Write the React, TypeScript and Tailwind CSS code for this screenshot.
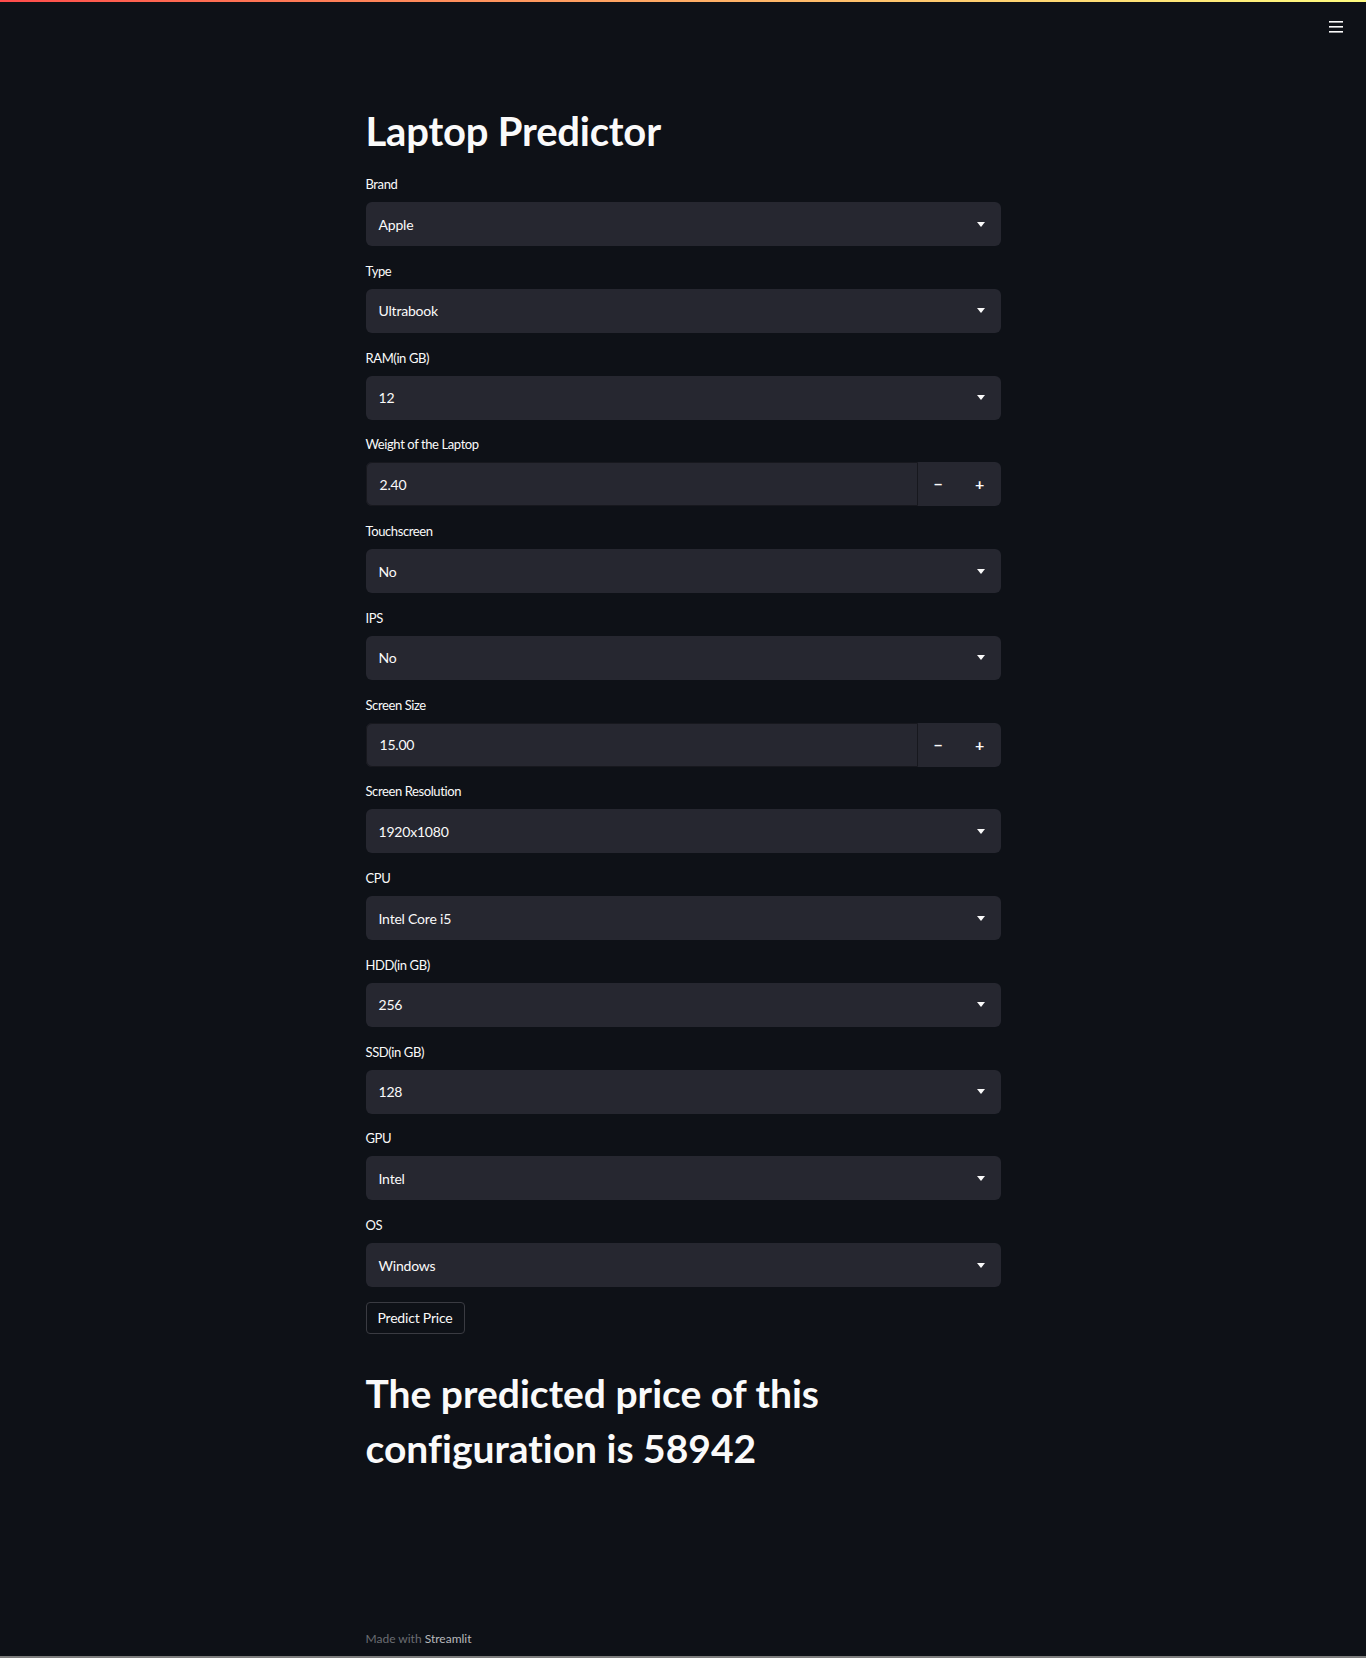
import React from "react";

type Field =
  | { kind: "select"; label: string; value: string }
  | { kind: "number"; label: string; value: string };

const fields: Field[] = [
  { kind: "select", label: "Brand", value: "Apple" },
  { kind: "select", label: "Type", value: "Ultrabook" },
  { kind: "select", label: "RAM(in GB)", value: "12" },
  { kind: "number", label: "Weight of the Laptop", value: "2.40" },
  { kind: "select", label: "Touchscreen", value: "No" },
  { kind: "select", label: "IPS", value: "No" },
  { kind: "number", label: "Screen Size", value: "15.00" },
  { kind: "select", label: "Screen Resolution", value: "1920x1080" },
  { kind: "select", label: "CPU", value: "Intel Core i5" },
  { kind: "select", label: "HDD(in GB)", value: "256" },
  { kind: "select", label: "SSD(in GB)", value: "128" },
  { kind: "select", label: "GPU", value: "Intel" },
  { kind: "select", label: "OS", value: "Windows" },
];

const Caret = () => (
  <svg width="8" height="5" viewBox="0 0 8 5" className="shrink-0">
    <path d="M0 0h8L4 5z" fill="#fafafa" />
  </svg>
);

const Menu = () => (
  <svg width="14" height="12" viewBox="0 0 14 12">
    <rect x="0" y="0" width="14" height="1.6" fill="#fafafa" />
    <rect x="0" y="5" width="14" height="1.6" fill="#fafafa" />
    <rect x="0" y="10" width="14" height="1.6" fill="#fafafa" />
  </svg>
);

const SelectBox = ({ value }: { value: string }) => (
  <div className="flex h-[44px] items-center justify-between rounded-[6px] bg-[#262730] pl-[13px] pr-[16px] text-[14px] tracking-[-0.2px] text-[#fafafa]">
    <span>{value}</span>
    <Caret />
  </div>
);

const NumberBox = ({ value }: { value: string }) => (
  <div className="flex h-[44px] rounded-[6px] bg-[#262730] text-[#fafafa]">
    <div className="flex flex-1 items-center rounded-l-[6px] border border-[#17181e] pl-[13px] text-[14px] tracking-[-0.2px]">
      {value}
    </div>
    <div className="flex w-[41.5px] items-center justify-center text-[16px] font-bold">−</div>
    <div className="flex w-[41.5px] items-center justify-center text-[16px] font-bold">+</div>
  </div>
);

export default function App() {
  return (
    <div
      className="flex h-[1658px] flex-col bg-[#0e1117] text-[#fafafa] [font-variant-ligatures:none]"
      style={{ fontFamily: "Lato, 'Open Sans', sans-serif" }}
    >
      <div className="h-[2px] bg-gradient-to-r from-[#ff4b4b] to-[#fffd80]" />
      <div className="flex justify-end pr-[23px] pt-[19px]">
        <Menu />
      </div>

      <main className="mx-auto mt-[72px] w-[635px]">
        <h1 className="text-[40px] font-bold leading-[52px] tracking-[-0.2px]">Laptop Predictor</h1>

        <div className="mt-[17px] flex flex-col gap-[14.75px]">
          {fields.map((f) => (
            <div key={f.label}>
              <div className="mb-[8px] text-[13px] leading-[20px] tracking-[-0.4px]">{f.label}</div>
              {f.kind === "select" ? <SelectBox value={f.value} /> : <NumberBox value={f.value} />}
            </div>
          ))}
          <div>
            <button className="h-[32px] w-[99px] rounded-[4px] border border-[#3a3b42] text-[14px] tracking-[-0.2px] text-[#fafafa]">
              Predict Price
            </button>
          </div>
        </div>

        <h2 className="mt-[32px] w-[520px] text-[39px] font-bold leading-[55px]">
          The predicted price of this configuration is 58942
        </h2>
      </main>

      <footer className="mx-auto mt-auto mb-[9px] w-[635px] text-[12px] leading-[16px]">
        <span className="text-[#6b6d72]">Made with </span>
        <span className="text-[#b8b9bc]">Streamlit</span>
      </footer>
      <div className="h-[2px] bg-[#7d7d7d]" />
    </div>
  );
}
